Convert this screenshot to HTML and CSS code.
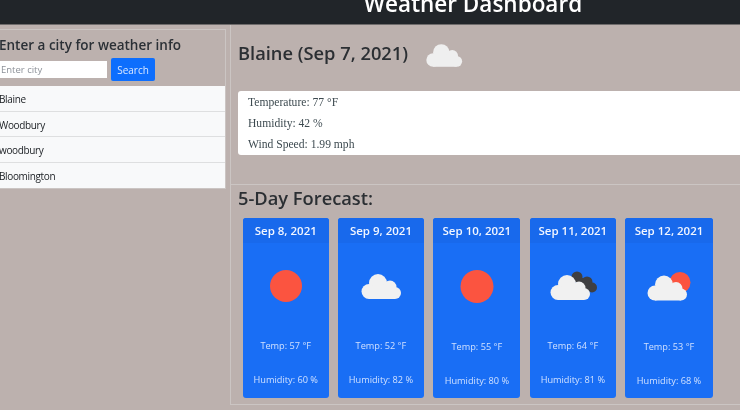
FILE: index.html
```html
<!DOCTYPE html>
<html>
	<head>
		<meta charset="utf-8" />
		<title>Weather Dashboard</title>
		<link rel="stylesheet" href="styles.css">
	</head>
	<body>
		<header class="topbar">
			<h1>Weather Dashboard</h1>
		</header>

		<svg class="defs" width="0" height="0">
			<symbol id="cloud" viewBox="0 0 64 64">
				<circle cx="29" cy="29" r="9" />
				<circle cx="41" cy="33" r="6.5" />
				<circle cx="20" cy="37.5" r="7.5" />
				<circle cx="46" cy="39" r="6" />
				<rect x="20" y="35" width="26" height="10" />
			</symbol>
		</svg>

		<div class="layout">
			<aside class="sidebar">
				<div class="search">
					<h2>Enter a city for weather info</h2>
					<form class="search-form">
						<input type="text" placeholder="Enter city">
						<button type="button">Search</button>
					</form>
				</div>
				<ul class="history">
					<li>Blaine</li>
					<li>Woodbury</li>
					<li>woodbury</li>
					<li>Bloomington</li>
				</ul>
			</aside>

			<main class="content">
				<section class="current">
					<div class="current-head">
						<h2>Blaine (Sep 7, 2021)</h2>
						<svg class="current-icon"><use href="#cloud" /></svg>
					</div>
					<div class="current-info">
						<p>Temperature: 77 °F</p>
						<p>Humidity: 42 %</p>
						<p>Wind Speed: 1.99 mph</p>
					</div>
				</section>

				<section class="forecast">
					<h2>5-Day Forecast:</h2>
					<div class="cards">
						<div class="card">
							<div class="card-head">Sep 8, 2021</div>
							<svg class="icon" viewBox="0 0 64 64"><circle class="sun" cx="32" cy="32" r="16" /></svg>
							<p class="temp">Temp: 57 °F</p>
							<p>Humidity: 60 %</p>
						</div>
						<div class="card">
							<div class="card-head">Sep 9, 2021</div>
							<svg class="icon cloud"><use href="#cloud" /></svg>
							<p class="temp">Temp: 52 °F</p>
							<p>Humidity: 82 %</p>
						</div>
						<div class="card wide">
							<div class="card-head">Sep 10, 2021</div>
							<svg class="icon" viewBox="0 0 64 64"><circle class="sun" cx="32" cy="32" r="16.5" /></svg>
							<p class="temp">Temp: 55 °F</p>
							<p>Humidity: 80 %</p>
						</div>
						<div class="card">
							<div class="card-head">Sep 11, 2021</div>
							<svg class="icon" viewBox="0 0 64 64">
								<circle class="dark" cx="36" cy="23" r="5.5" />
								<circle class="dark" cx="46" cy="28" r="5.5" />
								<circle class="dark" cx="51" cy="33.5" r="5" />
								<rect class="dark" x="36" y="24" width="12" height="12" />
								<use class="cloud" href="#cloud" x="-3" y="1" />
							</svg>
							<p class="temp">Temp: 64 °F</p>
							<p>Humidity: 81 %</p>
						</div>
						<div class="card wide">
							<div class="card-head">Sep 12, 2021</div>
							<svg class="icon" viewBox="0 0 64 64">
								<circle class="sun" cx="43" cy="28" r="10.5" />
								<use class="cloud" href="#cloud" x="-2" y="1" />
							</svg>
							<p class="temp">Temp: 53 °F</p>
							<p>Humidity: 68 %</p>
						</div>
					</div>
				</section>
			</main>
		</div>
	</body>
</html>
```

FILE: styles.css
```css
*{
	padding: 0;
	margin: 0;
	box-sizing: border-box;
}
html, body{
	height: 100%;
	overflow: hidden;
}
html{
	background-color: #bcb1ae;
}
body{
	background-color: #bcb1ae;
	color: #212529;
	font-family: "Open Sans", "Noto Sans", sans-serif;
	/*原图本身有点糊*/
	filter: blur(.4px);
}
ul{
	list-style: none;
}
.defs{
	display: block;
	height: 0;
}

/*顶部*/
.topbar{
	height: 25px;
	background-color: #212529;
	border-bottom: 1px solid #6f6c6c;
	display: flex;
	justify-content: center;
	align-items: flex-end;
	padding-left: 206px;
	overflow: hidden;
}
.topbar h1{
	color: #fff;
	font-size: 22.5px;
	font-weight: 600;
	line-height: 24px;
	margin-bottom: 8px;
	white-space: nowrap;
}

.layout{
	display: flex;
	height: 380px;
}

/*左边*/
.sidebar{
	width: 226px;
	flex: none;
	margin-top: 4px;
	margin-right: 4px;
	border-right: 1px solid #cbc5c3;
	border-top: 1px solid #cbc5c3;
	align-self: flex-start;
	border-bottom: 1px solid #cbc5c3;
}
.search{
	padding: 5px 0 5px;
}
.search h2{
	font-size: 13.5px;
	font-weight: 600;
	line-height: 20px;
	color: #2b3036;
	margin-left: -1px;
	white-space: nowrap;
}
.search-form{
	display: flex;
	align-items: center;
	gap: 4px;
	margin-top: 3px;
}
.search-form input{
	width: 107px;
	height: 17px;
	border: 0;
	padding: 0 1px;
	font-family: inherit;
	font-size: 9.5px;
	background-color: #fff;
}
.search-form input::placeholder{
	color: #8d9299;
}
.search-form button{
	width: 44px;
	height: 23px;
	border: 0;
	border-radius: 2px;
	background-color: #0d6efd;
	color: #dbe8ff;
	font-family: inherit;
	font-size: 10px;
}
.history li{
	height: 25.5px;
	line-height: 26px;
	background-color: #f8f9fa;
	border-bottom: 1px solid #dedfe0;
	font-size: 10px;
	letter-spacing: -.35px;
	margin-left: -1px;
}
.history li:last-child{
	border-bottom: 0;
}

/*右边*/
.content{
	flex: 1;
	border-left: 1px solid #cbc5c3;
	border-bottom: 1px solid #cbc5c3;
	min-width: 0;
}
.current{
	height: 160px;
	padding-left: 7px;
	border-bottom: 1px solid #cbc5c3;
}
.current-head{
	height: 66px;
	display: flex;
	align-items: center;
}
.current-head h2{
	font-size: 18.3px;
	font-weight: 600;
	line-height: 24px;
	margin-top: -10px;
	color: #2b2f33;
}
.current-icon{
	width: 58px;
	height: 58px;
	fill: #efefef;
	margin-left: 7px;
	margin-top: -6px;
}
.current-info{
	background-color: #fff;
	border-radius: 3px 0 0 3px;
	height: 64px;
	padding-left: 10px;
	padding-top: 1px;
	font-family: "Liberation Serif", serif;
	font-size: 11.6px;
	color: #3d4a50;
}
.current-info p{
	line-height: 21px;
}
.forecast{
	padding-left: 7px;
}
.forecast h2{
	font-size: 18.3px;
	font-weight: 600;
	line-height: 26px;
	color: #2b2f33;
}
.cards{
	display: grid;
	grid-template-columns: 85.5px 85.5px 87px 85.5px 87.5px;
	gap: 9.7px;
	margin-top: 7px;
	margin-left: 5px;
}
.card{
	height: 180px;
	background-color: #196ef5;
	border-radius: 3px;
	color: #cfe0ff;
	font-size: 9.2px;
	text-align: center;
	display: flex;
	flex-direction: column;
	align-items: center;
}
.card-head{
	width: 100%;
	height: 25px;
	line-height: 25px;
	font-size: 11.5px;
	font-weight: 600;
	color: #f2f6ff;
	background-color: #1869ec;
	border-radius: 3px 3px 0 0;
}
.icon{
	width: 64px;
	height: 64px;
	margin-top: 11px;
	flex: none;
}
.wide .icon{
	height: 65px;
}
.card p{
	line-height: 15px;
	white-space: nowrap;
}
.card .temp{
	margin-top: 20px;
	margin-bottom: 19px;
}
.sun{
	fill: #fb5440;
}
.cloud{
	fill: #f1f1f1;
}
.dark{
	fill: #3f3f41;
}
```
